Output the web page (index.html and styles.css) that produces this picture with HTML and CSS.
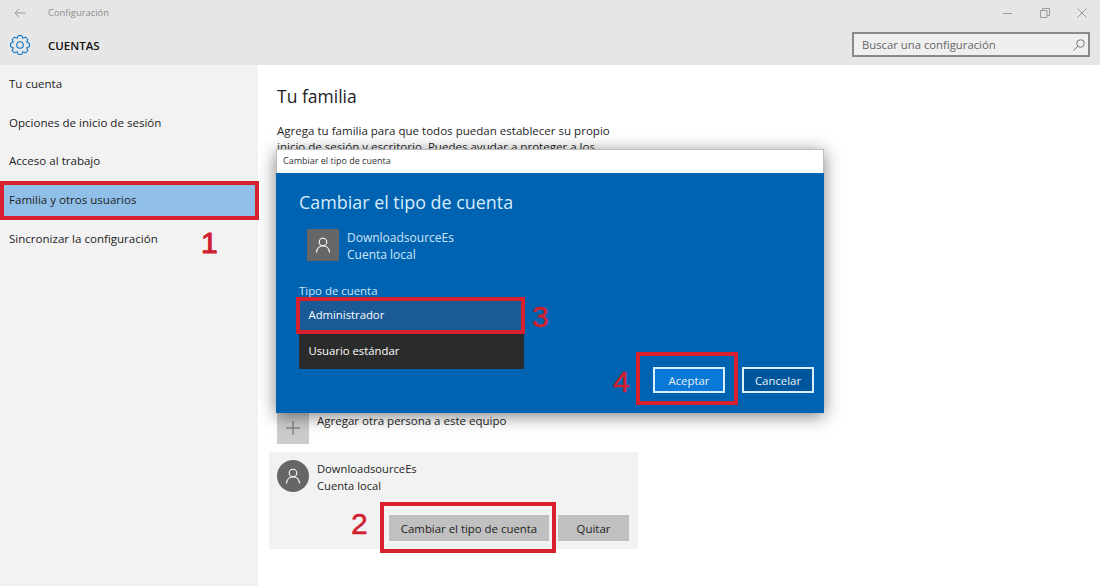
FILE: index.html
```html
<!DOCTYPE html>
<html lang="es">
<head>
  <meta charset="UTF-8">
  <title>Configuración</title>
  <link rel="stylesheet" href="styles.css">
</head>
<body>
  <div class="app">
    <header class="header">
      <div class="title-row">
        <svg class="back-icon" width="12" height="10" viewBox="0 0 12 10"><path d="M11.500 5H1M5 1 1 5l4 4" fill="none" stroke="#999" stroke-width="1"/></svg>
        <span class="app-title">Configuración</span>
        <div class="window-btns">
          <svg width="10" height="10" viewBox="0 0 10 10"><path d="M0 5.500h9" stroke="#9a9a9a" fill="none"/></svg>
          <svg width="10" height="10" viewBox="0 0 10 10"><path d="M.5 2.500h6.500v7H.5zM2.500 2.500v-2h7v7H7" stroke="#9a9a9a" fill="none"/></svg>
          <svg width="10" height="10" viewBox="0 0 10 10"><path d="M.5.5l9 9M9.500.5l-9 9" stroke="#9a9a9a" fill="none"/></svg>
        </div>
      </div>
      <div class="section-row">
        <svg class="gear-icon" width="20" height="20" viewBox="0 0 20 20">
          <g fill="none" stroke="#0a78c8" stroke-width="1.100" stroke-linejoin="round">
            <path id="tooth" d="M7.240 3.350 8.190.67Q10 .3 11.810.67L12.760 3.350"/>
            <use href="#tooth" transform="rotate(45 10 10)"/>
            <use href="#tooth" transform="rotate(90 10 10)"/>
            <use href="#tooth" transform="rotate(135 10 10)"/>
            <use href="#tooth" transform="rotate(180 10 10)"/>
            <use href="#tooth" transform="rotate(225 10 10)"/>
            <use href="#tooth" transform="rotate(270 10 10)"/>
            <use href="#tooth" transform="rotate(315 10 10)"/>
            <circle cx="10" cy="10" r="3.300"/>
          </g>
        </svg>
        <span class="section-title">CUENTAS</span>
        <div class="search-box">
          <span>Buscar una configuración</span>
          <svg width="12" height="12" viewBox="0 0 12 12"><circle cx="7.500" cy="4.500" r="3.800" fill="none" stroke="#777"/><path d="M4.800 7.200.5 11.500" stroke="#777" fill="none"/></svg>
        </div>
      </div>
    </header>

    <div class="columns">
      <nav class="sidebar">
        <a class="nav-item">Tu cuenta</a>
        <a class="nav-item">Opciones de inicio de sesión</a>
        <a class="nav-item">Acceso al trabajo</a>
        <a class="nav-item selected">Familia y otros usuarios</a>
        <a class="nav-item">Sincronizar la configuración</a>
      </nav>

      <main class="content">
        <h1 class="page-title">Tu familia</h1>
        <p class="intro">Agrega tu familia para que todos puedan establecer su propio inicio de sesión y escritorio. Puedes ayudar a proteger a los</p>

        <div class="add-row">
          <div class="plus-box">
            <svg width="14" height="14" viewBox="0 0 14 14"><path d="M7 0v14M0 7h14" stroke="#666" fill="none"/></svg>
          </div>
          <span class="add-label">Agregar otra persona a este equipo</span>
        </div>

        <div class="account-card">
          <div class="account-info">
            <div class="avatar-round">
              <svg width="16" height="16" viewBox="0 0 16 16"><circle cx="8" cy="5" r="3.800" fill="none" stroke="#fff" stroke-width="1.100"/><path d="M1.500 15.500c.3-3.800 2.800-6.700 6.500-6.700s6.200 2.900 6.500 6.700" fill="none" stroke="#fff" stroke-width="1.100"/></svg>
            </div>
            <div class="account-text">
              <div>DownloadsourceEs</div>
              <div>Cuenta local</div>
            </div>
          </div>
          <div class="account-actions">
            <button class="grey-btn change-btn">Cambiar el tipo de cuenta</button>
            <button class="grey-btn remove-btn">Quitar</button>
          </div>
        </div>
      </main>
    </div>
  </div>

  <div class="dialog">
    <div class="dialog-titlebar">Cambiar el tipo de cuenta</div>
    <div class="dialog-body">
      <h2 class="dialog-heading">Cambiar el tipo de cuenta</h2>
      <div class="dialog-user">
        <div class="avatar-square">
          <svg width="16" height="16" viewBox="0 0 16 16"><circle cx="8" cy="5" r="3.800" fill="none" stroke="#fff" stroke-width="1.100"/><path d="M1.500 15.500c.3-3.800 2.800-6.700 6.500-6.700s6.200 2.900 6.500 6.700" fill="none" stroke="#fff" stroke-width="1.100"/></svg>
        </div>
        <div class="dialog-user-text">
          <div>DownloadsourceEs</div>
          <div>Cuenta local</div>
        </div>
      </div>
      <div class="type-label">Tipo de cuenta</div>
      <div class="type-list">
        <div class="type-option active">Administrador</div>
        <div class="type-option">Usuario estándar</div>
      </div>
      <div class="dialog-actions">
        <button class="dialog-btn primary">Aceptar</button>
        <button class="dialog-btn">Cancelar</button>
      </div>
    </div>
  </div>

  <div class="mark mark-1"></div>
  <div class="mark mark-2"></div>
  <div class="mark mark-3"></div>
  <div class="mark mark-4"></div>
  <span class="step step-1">1</span>
  <span class="step step-2">2</span>
  <span class="step step-3">3</span>
  <span class="step step-4">4</span>
</body>
</html>
```

FILE: styles.css
```css
* {
  box-sizing: border-box;
}
html, body {
  height: 100%;
}
body {
  margin: 0;
  position: relative;
  overflow: hidden;
  background: #fff;
  color: #1f1f1f;
  font-family: "Open Sans", "Liberation Sans", sans-serif;
  font-size: 11.500px;
}
.app {
  height: 586px;
  display: flex;
  flex-direction: column;
}

/* cabecera */
.header {
  height: 65px;
  flex: none;
  background: #e6e6e6;
  padding: 0 10px 0 10px;
}
.title-row {
  height: 25px;
  display: flex;
  align-items: center;
}
.back-icon {
  margin-left: 4px;
}
.app-title {
  margin-left: 22px;
  font-size: 9.400px;
  color: #8c8c8c;
}
.window-btns {
  margin-left: auto;
  display: flex;
  gap: 27px;
  padding-right: 3px;
}
.section-row {
  height: 40px;
  display: flex;
  align-items: center;
}
.gear-icon {
  flex: none;
}
.section-title {
  margin-left: 18px;
  font-size: 11.500px;
  font-weight: 600;
  color: #111;
}
.search-box {
  margin-left: auto;
  margin-top: -1px;
  width: 238px;
  height: 25px;
  border: 2px solid #8a8a8a;
  background: #efefef;
  display: flex;
  align-items: center;
  justify-content: space-between;
  padding: 0 3px 0 8px;
  font-size: 11.300px;
  color: #666;
}

/* columnas */
.columns {
  flex: 1;
  display: flex;
}
.sidebar {
  width: 258px;
  flex: none;
  background: #f2f2f2;
}
.nav-item {
  display: block;
  height: 38.700px;
  line-height: 38.700px;
  padding-left: 9px;
  font-size: 11.550px;
  color: #222;
}
.nav-item.selected {
  background: #90bfe8;
}
.content {
  flex: 1;
  padding: 18px 0 0 19px;
}
.page-title {
  margin: 0;
  font-size: 17.500px;
  line-height: 26px;
  font-weight: 400;
  color: #222;
}
.intro {
  margin: 14px 0 0 0;
  width: 345px;
  font-size: 11.550px;
  line-height: 16px;
}
.add-row {
  margin-top: 257px;
  display: flex;
  align-items: flex-start;
  gap: 8px;
  height: 40px;
}
.plus-box {
  width: 32px;
  height: 32px;
  background: #cccccc;
  display: flex;
  align-items: center;
  justify-content: center;
}
.add-label {
  line-height: 18px;
}
.account-card {
  margin-left: -8px;
  width: 369px;
  height: 97px;
  background: #f2f2f2;
  padding: 8px;
}
.account-info {
  display: flex;
  gap: 8px;
}
.avatar-round {
  width: 32px;
  height: 32px;
  border-radius: 50%;
  background: #666;
  display: flex;
  align-items: center;
  justify-content: center;
}
.account-text {
  margin-top: 1px;
  font-size: 11.200px;
  line-height: 16.500px;
}
.account-actions {
  margin-top: 21px;
  display: flex;
  justify-content: flex-end;
  gap: 9px;
  padding-right: 1px;
}
.grey-btn {
  height: 26px;
  border: 0;
  background: #c0c0c0;
  color: #222;
  font: inherit;
  font-size: 11.400px;
  padding: 0;
}
.change-btn {
  width: 160px;
}
.remove-btn {
  width: 71px;
}

/* dialogo */
.dialog {
  position: absolute;
  left: 276px;
  top: 149px;
  width: 548px;
  height: 264px;
  display: flex;
  flex-direction: column;
  box-shadow: 0 3px 16px rgba(0, 0, 0, 0.5);
}
.dialog-titlebar {
  height: 24px;
  flex: none;
  background: #fff;
  border: 1px solid #bdbdbd;
  border-bottom: 0;
  padding-left: 6px;
  font-size: 9px;
  line-height: 22px;
  color: #333;
}
.dialog-body {
  flex: 1;
  min-height: 0;
  background: #0063b1;
  color: #fff;
  padding: 15px 10px 0 23px;
  display: flex;
  flex-direction: column;
}
.dialog-heading {
  margin: 0;
  font-size: 17.900px;
  line-height: 28px;
  font-weight: 400;
  color: #d8ecfa;
}
.dialog-user {
  margin: 13px 0 0 8px;
  display: flex;
  gap: 8px;
}
.avatar-square {
  width: 32px;
  height: 32px;
  background: #666;
  display: flex;
  align-items: center;
  justify-content: center;
}
.dialog-user-text {
  font-size: 12px;
  line-height: 17px;
  color: #cfe6f7;
}
.type-label {
  margin-top: 20px;
  margin-bottom: -2px;
  font-size: 11.400px;
  line-height: 16px;
  color: #cfe6f7;
}
.type-list {
  width: 225px;
}
.type-option {
  height: 36px;
  line-height: 36px;
  padding-left: 9.500px;
  font-size: 11.300px;
  background: #2b2b2b;
}
.type-option.active {
  background: #1a5a96;
}
.dialog-actions {
  margin-top: -2px;
  display: flex;
  justify-content: flex-end;
  gap: 17px;
}
.dialog-btn {
  width: 72px;
  height: 26px;
  border: 2px solid #d9eefb;
  background: #00569c;
  color: #e6f2fb;
  font: inherit;
  font-size: 11.400px;
  padding: 0;
}
.dialog-btn.primary {
  background: #0a78d7;
}

/* anotaciones rojas */
.mark {
  position: absolute;
  border: 4px solid #d8202f;
}
.mark-1 {
  left: 0;
  top: 181px;
  width: 259px;
  height: 39px;
}
.mark-2 {
  left: 380px;
  top: 502px;
  width: 176px;
  height: 51px;
}
.mark-3 {
  left: 296px;
  top: 297px;
  width: 229px;
  height: 37px;
}
.mark-4 {
  left: 636px;
  top: 352px;
  width: 102px;
  height: 53px;
}
.step {
  position: absolute;
  font-family: "Liberation Sans", sans-serif;
  font-size: 30px;
  line-height: 30px;
  color: #d0202e;
  -webkit-text-stroke: 0.5px #d0202e;
}
.step-1 {
  left: 201px;
  top: 228px;
  -webkit-text-stroke-width: 1px;
}
.step-2 {
  left: 351px;
  top: 509px;
}
.step-3 {
  left: 532px;
  top: 302px;
}
.step-4 {
  left: 613px;
  top: 367px;
}
```
